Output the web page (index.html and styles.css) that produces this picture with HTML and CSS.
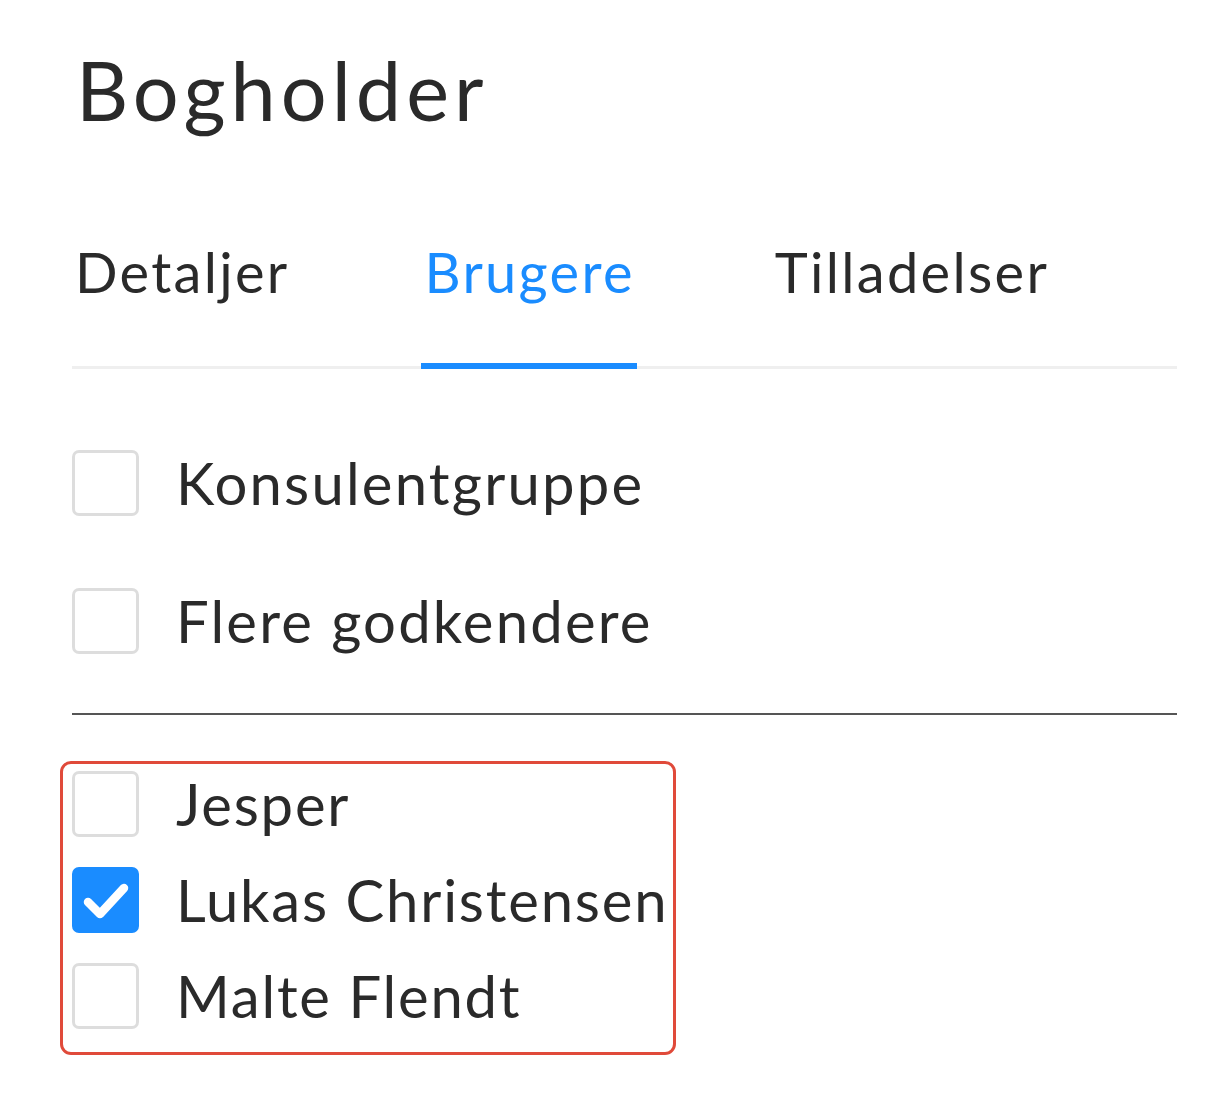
FILE: index.html
```html
<!DOCTYPE html>
<html lang="da">
<head>
<meta charset="utf-8">
<title>Bogholder</title>
<link rel="stylesheet" href="styles.css">
</head>
<body>
<div class="page">
  <h1 class="title">Bogholder</h1>
  <nav class="tabs">
    <div class="tab">Detaljer</div>
    <div class="tab active">Brugere</div>
    <div class="tab">Tilladelser</div>
  </nav>
  <div class="options">
    <label class="opt"><span class="box"></span><span class="lbl">Konsulentgruppe</span></label>
    <label class="opt"><span class="box"></span><span class="lbl">Flere godkendere</span></label>
  </div>
  <hr class="divider">
  <div class="users">
    <label class="user"><span class="box"></span><span class="lbl">Jesper</span></label>
    <label class="user"><span class="box checked"><svg viewBox="0 0 67 66" width="67" height="66"><path d="M16 35 L28 47 L52 21" fill="none" stroke="#fff" stroke-width="8.5" stroke-linecap="round" stroke-linejoin="round"/></svg></span><span class="lbl">Lukas Christensen</span></label>
    <label class="user"><span class="box"></span><span class="lbl">Malte Flendt</span></label>
  </div>
</div>
</body>
</html>
```
FILE: styles.css
```css
html, body {
  margin: 0;
  padding: 0;
  background: #fff;
}
body {
  font-family: Lato, "Open Sans", sans-serif;
  color: #2a2a2a;
}
.page {
  padding: 0 34px 0 72px;
}
.title {
  margin: 0;
  padding-top: 40px;
  font-size: 81px;
  font-weight: 400;
  line-height: 100px;
  padding-left: 4px;
  letter-spacing: 5px;
}
.tabs {
  display: flex;
  gap: 128px;
  margin-top: 102px;
  border-bottom: 3px solid #efefef;
  height: 127px;
  box-sizing: border-box;
}
.tab {
  font-size: 56px;
  line-height: 60px;
  padding: 0 3px;
  letter-spacing: 2.3px;
  height: 124px;
  box-sizing: border-box;
  white-space: nowrap;
}
.tab:last-child {
  margin-left: 7px;
}
.tab.active {
  color: #1a8cff;
  border-bottom: 6px solid #1a8cff;
  padding: 0 2px 0 4px;
  height: 127px;
}
.options {
  padding-top: 81px;
  display: flex;
  flex-direction: column;
  gap: 72px;
}
.opt, .user {
  display: flex;
  align-items: center;
  height: 66px;
}
.box {
  width: 67px;
  height: 66px;
  box-sizing: border-box;
  border: 3px solid #dddddd;
  border-radius: 7px;
  flex: none;
  display: flex;
}
.box.checked {
  background: #1a8cff;
  border-color: #1a8cff;
}
.box.checked svg {
  margin: -3px;
}
.lbl {
  font-size: 58px;
  margin-left: 37px;
  line-height: 66px;
  letter-spacing: 2.2px;
  white-space: nowrap;
}
.user .lbl {
  letter-spacing: 1.8px;
}
.divider {
  margin: 59px 0 0 0;
  border: 0;
  border-top: 2px solid #555;
  height: 0;
}
.users {
  margin-top: 46px;
  margin-left: -12px;
  width: 616px;
  box-sizing: border-box;
  border: 3px solid #e04a3a;
  border-radius: 11px;
  padding: 7px 9px 23px 9px;
  display: flex;
  flex-direction: column;
  gap: 30px;
}
```
